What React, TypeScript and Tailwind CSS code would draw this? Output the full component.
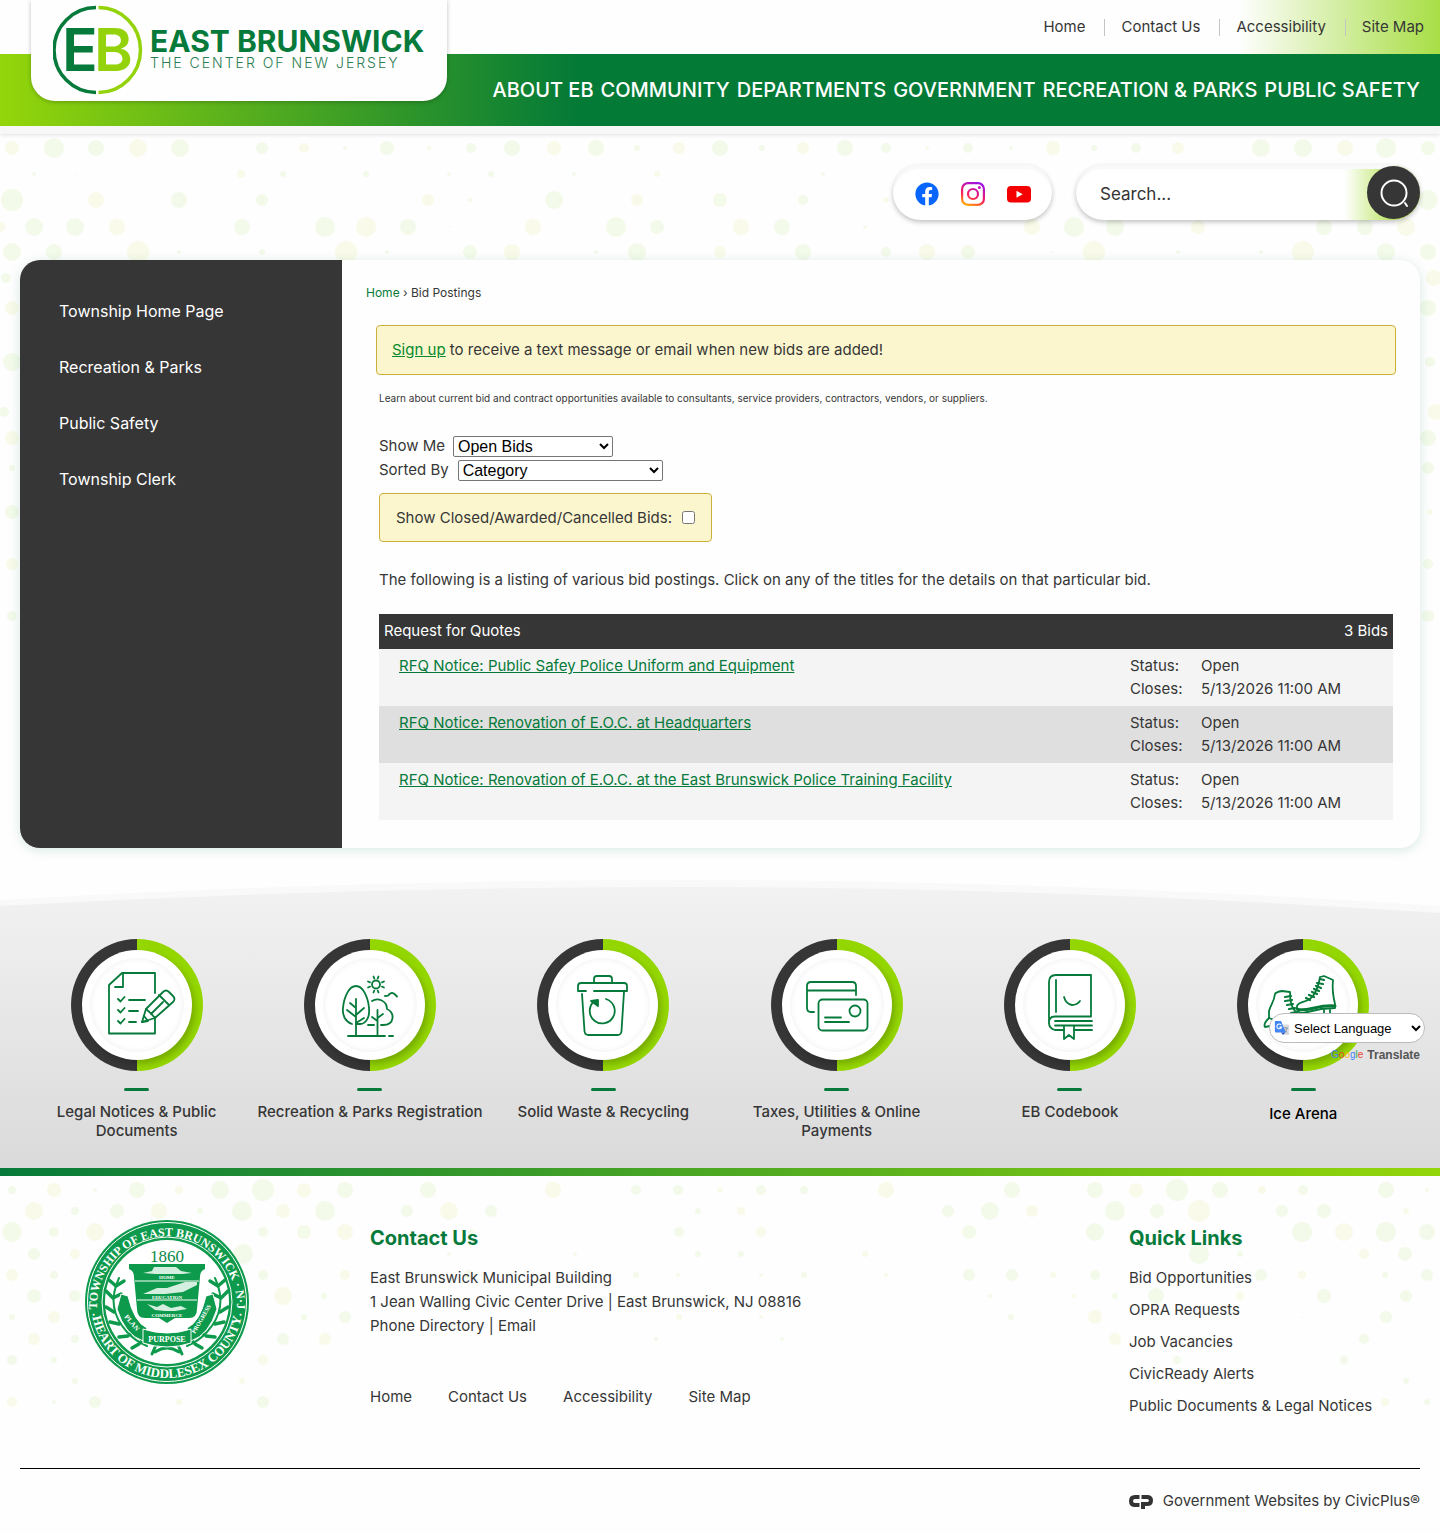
import type { ReactNode } from "react"
import { FaFacebook } from "react-icons/fa"

const topLinks = ["Home", "Contact Us", "Accessibility", "Site Map"]
const navLinks = ["ABOUT EB", "COMMUNITY", "DEPARTMENTS", "GOVERNMENT", "RECREATION & PARKS", "PUBLIC SAFETY"]
const sideLinks = ["Township Home Page", "Recreation & Parks", "Public Safety", "Township Clerk"]
const quickLinks = ["Bid Opportunities", "OPRA Requests", "Job Vacancies", "CivicReady Alerts", "Public Documents & Legal Notices"]

const bids = [
    "RFQ Notice: Public Safey Police Uniform and Equipment",
    "RFQ Notice: Renovation of E.O.C. at Headquarters",
    "RFQ Notice: Renovation of E.O.C. at the East Brunswick Police Training Facility",
]

// every row is [y, [x, radius], ...]
type DotRow = [number, ...[number, number][]]

const headerDots: DotRow[] = [
    [126, [117, 8], [1324, 8]],
    [148, [12, 7], [54, 10], [96, 8], [138, 9], [180, 9], [262, 6], [304, 5], [345, 2], [387, 7], [429, 2], [471, 5],
        [512, 8], [554, 7], [596, 8], [637, 3], [679, 6], [720, 8], [762, 3], [803, 6], [845, 8], [886, 5], [927, 2],
        [968, 5], [1011, 2], [1053, 7], [1094, 3], [1136, 5], [1178, 6], [1261, 9], [1303, 9], [1345, 8], [1386, 10], [1428, 7]],
    [174, [34, 2], [75, 1], [241, 4], [283, 3], [366, 3], [449, 2], [491, 3], [574, 2], [657, 3], [823, 2], [1240, 2], [1406, 2]],
    [200, [12, 11], [96, 8], [179, 8], [262, 6], [428, 6], [470, 2], [554, 9], [637, 6], [720, 7], [803, 5], [886, 3], [1428, 10]],
    [227, [0, 5], [34, 9], [75, 9], [117, 8], [242, 8], [325, 10], [366, 10], [408, 8], [450, 1], [533, 8], [616, 10],
        [657, 7], [741, 8], [782, 8], [865, 2], [1032, 8], [1074, 10], [1115, 9], [1198, 7], [1324, 8], [1365, 8], [1406, 9]],
    [252, [12, 9], [54, 8], [138, 11], [179, 2], [262, 3], [346, 11], [387, 2], [470, 7], [512, 8], [596, 2], [637, 9],
        [720, 6], [803, 8], [886, 5], [927, 8], [968, 7], [1053, 1], [1094, 11], [1178, 2], [1261, 2], [1303, 11], [1386, 9], [1428, 8]],
    [278, [6, 5], [1434, 8]],
    [308, [12, 7], [1428, 8]],
    [362, [12, 9], [1430, 5]],
    [412, [4, 5], [1436, 8]],
    [438, [12, 7], [1428, 8]],
    [468, [12, 3], [1428, 6]],
    [512, [12, 7], [1430, 3]],
    [564, [12, 6], [1428, 5]],
    [616, [12, 5], [1428, 6]],
]

const footerDots: DotRow[] = [
    [22, [12, 4], [54, 7], [95, 2], [137, 8], [179, 4], [220, 9], [263, 11], [304, 7], [345, 8], [428, 8], [553, 8], [636, 5],
        [678, 5], [720, 3], [761, 5], [804, 4], [886, 8], [1012, 8], [1095, 8], [1136, 7], [1177, 11], [1220, 8], [1262, 4],
        [1303, 5], [1386, 8], [1427, 2]],
    [43, [34, 9], [75, 4], [117, 7], [159, 8], [200, 3], [242, 10], [283, 7], [325, 10], [407, 6], [449, 9], [491, 6],
        [698, 3], [741, 4], [948, 6], [990, 9], [1032, 6], [1115, 10], [1157, 7], [1199, 11], [1282, 6], [1324, 7], [1406, 3]],
    [64, [12, 10], [54, 5], [95, 9], [263, 5], [304, 7], [345, 8], [471, 3], [679, 5], [761, 5], [969, 7], [1011, 1],
        [1053, 1], [1095, 9], [1302, 10], [1344, 9], [1386, 10], [1427, 8]],
    [86, [34, 6], [75, 5], [243, 10], [449, 2], [575, 2], [698, 3], [741, 3], [865, 3], [1199, 10], [1240, 3], [1364, 5], [1405, 7]],
    [107, [12, 6], [54, 4], [263, 5], [345, 5], [469, 5], [636, 3], [678, 2], [761, 2], [804, 3], [886, 2], [969, 6], [1012, 6],
        [1053, 3], [1095, 5], [1261, 6], [1302, 4], [1385, 3], [1427, 6]],
    [128, [34, 7], [75, 6], [283, 9], [324, 3], [990, 2], [1074, 2], [1115, 3], [1156, 8], [1240, 4], [1324, 7], [1406, 6]],
    [149, [12, 3], [54, 6], [304, 3], [345, 6], [679, 3], [761, 2], [1011, 3], [1095, 7], [1302, 1], [1386, 6]],
    [171, [34, 6], [75, 4], [283, 6], [325, 6], [656, 2], [782, 2], [1115, 6], [1364, 5]],
    [192, [12, 5], [54, 3], [263, 5], [1177, 4], [1344, 4]],
    [213, [75, 3], [242, 3], [1406, 3]],
    [234, [12, 5], [54, 2], [95, 6], [179, 3], [263, 6], [1177, 3], [1385, 4], [1427, 3]],
]

const Dots = ({ rows, height }: { rows: DotRow[]; height: number }) => (
    <svg
        width="1440"
        height={height}
        viewBox={`0 0 1440 ${height}`}
        aria-hidden="true"
        className="absolute top-0 left-0 pointer-events-none"
    >
        {rows.map(([y, ...dots], r) =>
            dots.map(([x, radius], i) => (
                <circle key={`${r}-${i}`} cx={x} cy={y} r={radius} fill={(r + i) % 3 === 1 ? "#f9fae9" : "#f3faea"} />
            ))
        )}
    </svg>
)

const Logo = () => (
    <svg width="376" height="92" viewBox="0 0 376 92" role="img" aria-label="East Brunswick, The Center of New Jersey">
        <path d="M43 3.500a42 42.500 0 0 0 0 85" fill="none" stroke="#067a3a" strokeWidth="3.500" />
        <path d="M45.500 3.500a42 42.500 0 0 1 0 85" fill="none" stroke="#94d30c" strokeWidth="3.500" />
        <g fontFamily="Inter, sans-serif">
            <text x="9" y="67" fontSize="59" fontWeight="600" fill="#067a3a">E</text>
            <text x="41" y="67" fontSize="59" fontWeight="600" fill="#94d30c">B</text>
            <text x="97" y="48" fontSize="30" fontWeight="700" fill="#067a3a">EAST BRUNSWICK</text>
            <text x="97" y="64" fontSize="14" fontWeight="300" fill="#2a7d52" className="tracking-[2px]">
                THE CENTER OF NEW JERSEY
            </text>
        </g>
    </svg>
)

const InstagramIcon = () => (
    <svg width="24" height="24" viewBox="0 0 24 24" fill="none" strokeWidth="2.200" aria-hidden="true">
        <defs>
            <linearGradient id="insta" x1="6" y1="24" x2="16" y2="0" gradientUnits="userSpaceOnUse">
                <stop offset="0" stopColor="#ffb400" />
                <stop offset="0.400" stopColor="#fb1e5a" />
                <stop offset="1" stopColor="#9a10e8" />
            </linearGradient>
        </defs>
        <rect x="1.100" y="1.100" width="21.800" height="21.800" rx="6" stroke="url(#insta)" />
        <circle cx="12" cy="12" r="5" stroke="url(#insta)" />
        <circle cx="18.400" cy="5.600" r="1.500" fill="#c012b8" />
    </svg>
)

const YoutubeIcon = () => (
    <svg width="24" height="24" viewBox="0 0 24 24" aria-hidden="true">
        <rect x="0" y="4" width="24" height="16.500" rx="4" fill="#f40000" />
        <path d="M9.500 8.800v7l6.200-3.500z" fill="#fff" />
    </svg>
)

const NoticesIcon = () => (
    <>
        <path d="M58 28V8H25L12 20v48.500h46V52" />
        <path d="M26 9v13h-8" />
        <path d="M21 34l2.500 2.500 4-4.500M21 45l2.500 2.500 4-4.500M21 56l2.500 2.500 4-4.500" />
        <path d="M32 35h16M32 46h9M32 57h7" />
        <path d="M45 57l4-13 17-17q3-3 6 0l4 4q3 3 0 6L58 53z" />
        <path d="M49 44q5 4 9 9M62 30l10 10M54 49l12-12M45 57l6-1-4-5" />
    </>
)

const ParksIcon = () => (
    <>
        <path d="M22 59c-6-2-10-8-9-16 1-11 6-22 13-22s12 11 13 22c1 9-3 16-9 16h-4" />
        <path d="M26 34v37M20 38l6 5M17 45l9 7M34 43l-8 7M34 53l-8 5" />
        <path d="M42 36c6-4 15 0 15 8 8 3 8 16-4 16h-2M38 60h6" />
        <path d="M47.500 45v26M42 52l5.500 4M53 49l-5.500 4" />
        <path d="M18 71h37M59 71h4" />
        <circle cx="46" cy="19.500" r="4" />
        <path d="M43.500 11.500l.8 2M48.500 11.500l-.8 2M43.500 27.500l.8-2M48.500 27.500l-.8-2M38 16.500l2 .8M54 16.500l-2 .8M38 22.500l2-.8M54 22.500l-2-.8" />
        <path d="M55 31q4 0 4-1.500 3-3 6 0l2 2" />
    </>
)

const RecyclingIcon = () => (
    <>
        <path d="M23 26h-8v-5q0-3 3-3h43q3 0 3 3v5H31" />
        <path d="M31 18v-4q0-3 3-3h12q3 0 3 3v4" />
        <path d="M19 29l2.500 37q.3 4 4 4h29q3.700 0 4-4L61 27" />
        <path d="M43 34A12.500 12.500 0 1 1 31 36.500" />
        <path d="M28 36l7-1v6z" fill="#067a3a" />
    </>
)

const PaymentsIcon = () => (
    <>
        <path d="M17 47h-3q-4 0-4-4V21q0-4 4-4h41q4 0 4 4v9M10 25.500h49" />
        <rect x="21.500" y="34.500" width="49" height="31" rx="4" />
        <circle cx="58" cy="46" r="5.500" />
        <path d="M28 52.500h16M28 57h24" />
    </>
)

const CodebookIcon = () => (
    <>
        <path d="M61 51.500V10H26q-7 0-7 7v42M61 51.500H25q-6 0-6 6t6 7.500h9M44 65h18" />
        <path d="M26 15v32M34 32q2 7 8 8 5 0 8-4" />
        <path d="M25 56h37M25 60.500h37" />
        <path d="M34 61v13l5-4 5 4V61" />
    </>
)

const SkatesIcon = () => (
    <>
        <path d="M57 12l4-1 9 4c-1 9 0 16 2 24v4l-14 1-18 4q-7 0-6-7c1-5 11-3 16-10 4-6 6-12 7-19z" />
        <path d="M34 44c8 4 22-5 38-3" strokeWidth="3" />
        <path d="M57 14l4 1M54 18l6 1M53 21l5 2M51 24l5 2M49 27l5 2M46 30l5 2M43 33l4 2" strokeWidth="2.200" />
        <path d="M39 49v5M61 45v6h6v-6M33 54h36q5 0 5-3" />
        <path d="M27 27l-8-1q-6 1-7 3c-1 8-4 10-6 17v7l16 6 14-2q4-7-4-11-5-5-5-19z" />
        <path d="M22 32l6-1M22 36l7-1M24 40l6-1M26 44l6-1M28 48l6-1" strokeWidth="2.200" />
        <path d="M6 53q-6 6-4 9l5-1" />
    </>
)

const Service = ({ label, icon, labelClass = "mt-[11px]" }: { label: string; icon: ReactNode; labelClass?: string }) => (
    <a href="#" className="flex flex-col items-center px-1 text-center">
        <span className="flex h-[132px] w-[132px] items-center justify-center rounded-full bg-linear-to-r from-[#363636] from-50% to-[#94d600] to-50%">
            <span className="flex h-[110px] w-[110px] items-center justify-center rounded-full bg-white shadow-[3px_4px_6px_rgba(0,0,0,0.2)]">
                <span className="flex h-[94px] w-[94px] items-center justify-center rounded-full shadow-[inset_0_0_6px_rgba(0,0,0,0.07)]">
                    <svg
                        width="80"
                        height="80"
                        viewBox="0 0 80 80"
                        fill="none"
                        stroke="#067a3a"
                        strokeWidth="1.800"
                        strokeLinecap="round"
                        strokeLinejoin="round"
                        aria-hidden="true"
                    >
                        {icon}
                    </svg>
                </span>
            </span>
        </span>
        <span className="mt-[17px] h-[3px] w-[25px] rounded-full bg-[#067a3a]" />
        <span className={`text-[15px] leading-[19px] font-medium ${labelClass}`}>{label}</span>
    </a>
)

const Seal = () => (
    <svg width="164" height="164" viewBox="0 0 164 164" role="img" aria-label="Township of East Brunswick seal">
        <defs>
            <path id="sealTop" d="M13 98a70 70 0 1 1 138 0" />
            <path id="sealBottom" d="M6 82a76 76 0 0 0 152 0" />
        </defs>
        <circle cx="82" cy="82" r="82" fill="#0d9a4c" />
        <circle cx="82" cy="82" r="79.500" fill="none" stroke="#fff" />
        <circle cx="82" cy="82" r="65" fill="none" stroke="#fff" />
        <circle cx="82" cy="82" r="62" fill="#fff" />
        <g fontFamily="'Liberation Serif', serif" fontWeight="700" fill="#fff">
            <text fontSize="12">
                <textPath href="#sealTop" startOffset="50%" textAnchor="middle">· TOWNSHIP OF EAST BRUNSWICK · N·J ·</textPath>
            </text>
            <text fontSize="13">
                <textPath href="#sealBottom" startOffset="50%" textAnchor="middle">HEART OF MIDDLESEX COUNTY</textPath>
            </text>
        </g>
        <text x="82" y="42" fontSize="17" textAnchor="middle" fontFamily="'Liberation Serif', serif" fill="#0d8a48">1860</text>
        <path d="M44 44h76v5q-5 2-5 8l-3 32q0 9-8 9H90l-8 5-8-5H60q-8 0-8-9l-3-32q0-6-5-8z" fill="#0d9a4c" />
        <path d="M50 61h64M52 80h60" stroke="#fff" strokeWidth="1" />
        <g fill="#d4eedf">
            <path d="M58 53l9-2 2-4h22l5 4 11 2-10 1H70z" />
            <path d="M58 74l14-6 10 0 18-6h12v3l-14 7-18 2z" />
            <path d="M62 84l10 3 6-3 8 4 10-2 6 3-12 2-10 0-10-1z" />
        </g>
        <g fontFamily="'Liberation Serif', serif" fontWeight="700" fontSize="5" textAnchor="middle" fill="#fff">
            <text x="82" y="59">HOME</text>
            <text x="82" y="79">EDUCATION</text>
            <text x="82" y="97">COMMERCE</text>
        </g>
        <g fill="none" stroke="#0d9a4c" strokeWidth="2" strokeLinecap="round">
            <path d="M34 58q-14 30 8 54 8 9 20 14M130 58q14 30-8 54-8 9-20 14" />
            <path d="M31 66l-7-6M31 66l8-5M28 78l-7-7M28 78l8-4M29 92l-8-5M34 104l-9-2M43 116l-9 1M54 124l-7 4M46 114l2-6M56 122l3-6" strokeWidth="3.500" />
            <path d="M133 66l7-6M133 66l-8-5M136 78l7-7M136 78l-8-4M135 92l8-5M130 104l9-2M121 116l9 1M110 124l7 4M118 114l-2-6M108 122l-3-6" strokeWidth="3.500" />
            <path d="M70 132q12-8 24 0M71 125l-4 9M93 125l4 9" strokeWidth="3" />
        </g>
        <path d="M36 74l-4 15q8 26 26 32l4-13q-13-6-19-32zM128 74l4 15q-8 26-26 32l-4-13q13-6 19-32z" fill="#0d9a4c" stroke="#fff" strokeWidth="1" />
        <path d="M58 109q24 8 48 0v14q-24 8-48 0z" fill="#0d9a4c" stroke="#fff" strokeWidth="1" />
        <g fontFamily="'Liberation Serif', serif" fontWeight="700" fill="#fff">
            <text fontSize="8" textAnchor="middle" x="82" y="122">PURPOSE</text>
            <text fontSize="7" transform="translate(39 97) rotate(50)">PLAN</text>
            <text fontSize="6" transform="translate(110 114) rotate(-60)">PROGRESS</text>
        </g>
    </svg>
)

const Header = () => (
    <header className="relative">
        <div className="flex h-[54px] items-center justify-end bg-[#fefefe] bg-linear-to-r from-transparent from-86% to-[#a8de46] to-100%">
            {topLinks.map((link, i) => (
                <span key={link} className="flex items-center">
                    {i > 0 && <span className="h-[17px] w-px bg-[#c4c4c4]" />}
                    <a href="#" className={i === topLinks.length - 1 ? "px-4 text-[15px] leading-6" : "pr-[19px] pl-4 text-[15px] leading-6"}>
                        {link}
                    </a>
                </span>
            ))}
        </div>
        <nav className="flex h-[72px] items-center justify-end gap-[7px] bg-linear-to-r/srgb from-[#94d60a] to-[#047a37] to-40% pr-5 shadow-[0_8px_0_#f7f7f8,0_9px_4px_rgba(0,0,0,0.12)]">
            {navLinks.map((link) => (
                <a key={link} href="#" className="text-xl leading-6 font-medium whitespace-nowrap text-white">
                    {link}
                </a>
            ))}
        </nav>
        <a href="#" className="absolute top-0 left-[31px] block h-[101px] w-[416px] rounded-b-[24px] bg-[#fefefe] pt-1 pl-[22px] shadow-[0_1px_4px_rgba(0,0,0,0.25)]">
            <Logo />
        </a>
    </header>
)

const Toolbar = () => (
    <div className="flex justify-end gap-6 px-5 pt-[39px]">
        <div className="flex h-[55px] w-[159px] items-center justify-center gap-[22px] rounded-full bg-white pt-0.5 shadow-[0_2px_5px_rgba(0,0,0,0.25),inset_0_4px_0_#f9f9f9]">
            <a href="#" aria-label="Facebook"><FaFacebook size={24} color="#0866ff" /></a>
            <a href="#" aria-label="Instagram"><InstagramIcon /></a>
            <a href="#" aria-label="YouTube"><YoutubeIcon /></a>
        </div>
        <form className="flex h-[55px] w-[344px] items-center rounded-full bg-white bg-linear-to-r from-transparent from-78% to-[#94d60a] shadow-[0_2px_5px_rgba(0,0,0,0.25),inset_0_4px_0_#f9f9f9]">
            <input
                type="search"
                aria-label="Search"
                placeholder="Search..."
                className="h-full min-w-0 flex-1 bg-transparent pt-0.5 pl-6 text-[17px] text-[#333] outline-none placeholder:text-[#333]"
            />
            <button type="button" aria-label="Search" className="flex h-[53px] w-[53px] items-center justify-center rounded-full bg-[#363636]">
                <svg width="30" height="30" viewBox="0 0 30 30" fill="none" stroke="#fff" strokeWidth="2" strokeLinecap="round" aria-hidden="true">
                    <circle cx="15" cy="15" r="12.500" />
                    <path d="M26 25l2 3" />
                </svg>
            </button>
        </form>
    </div>
)

const BidTable = () => (
    <table className="mt-[22px] w-full text-left text-[15px] leading-[23px]">
        <thead>
            <tr className="bg-[#363636] text-white">
                <th className="px-[5px] pt-[5px] pb-[7px] font-normal">Request for Quotes</th>
                <th colSpan={2} className="px-[5px] pt-[5px] pb-[7px] text-right font-normal">3 Bids</th>
            </tr>
        </thead>
        <tbody>
            {bids.map((bid) => (
                <tr key={bid} className="align-top odd:bg-[#f4f4f4] even:bg-[#dfdfdf]">
                    <td className="pt-[5px] pb-1.5 pl-5">
                        <a href="#" className="text-[#067a3a] underline">{bid}</a>
                    </td>
                    <td className="w-[71px] pt-[5px] pb-1.5">Status:<br />Closes:</td>
                    <td className="w-[192px] pt-[5px] pb-1.5">Open<br />5/13/2026 11:00 AM</td>
                </tr>
            ))}
        </tbody>
    </table>
)

const Main = () => (
    <main className="mx-5 mt-10 flex min-h-[588px] overflow-hidden rounded-[20px] bg-[#fefefe] shadow-[0_2px_12px_rgba(4,122,90,0.16)]">
        <aside className="w-[23%] bg-[#363636] pt-[39px] pl-[39px]">
            <ul className="flex flex-col gap-8">
                {sideLinks.map((link) => (
                    <li key={link}>
                        <a href="#" className="block text-base text-white">{link}</a>
                    </li>
                ))}
            </ul>
        </aside>
        <section className="flex-1 px-6 pt-6">
            <div className="text-xs leading-[18px]">
                <a href="#" className="text-[#067a3a]">Home</a> › Bid Postings
            </div>
            <div className="mt-[23px] ml-2.5 rounded border border-[#cbb13c] bg-[#fcf6ce] px-[15px] py-3 text-[15px] leading-6">
                <a href="#" className="text-[#078a2e] underline">Sign up</a> to receive a text message or email when new bids are added!
            </div>
            <div className="mr-[3px] ml-[13px]">
                <p className="mt-[15px] text-[10px] leading-4">
                    Learn about current bid and contract opportunities available to consultants, service providers, contractors, vendors, or suppliers.
                </p>
                <div className="mt-7 flex h-6 items-center gap-2 text-[15px]">
                    <label htmlFor="show">Show Me</label>
                    <select id="show" className="h-[21px] w-[160px] rounded-xs border border-[#767676] bg-white font-['Liberation_Sans',sans-serif] text-base leading-none text-black">
                        <option>Open Bids</option>
                    </select>
                </div>
                <div className="flex h-6 items-center gap-[9px] text-[15px]">
                    <label htmlFor="sort">Sorted By</label>
                    <select id="sort" className="h-[21px] w-[205px] rounded-xs border border-[#767676] bg-white font-['Liberation_Sans',sans-serif] text-base leading-none text-black">
                        <option>Category</option>
                    </select>
                </div>
                <label className="mt-[11px] flex w-fit items-center gap-2.5 rounded border border-[#cbb13c] bg-[#fcf6ce] px-4 py-3 text-[15px] leading-[23px]">
                    Show Closed/Awarded/Cancelled Bids:
                    <input type="checkbox" className="h-[13px] w-[13px]" />
                </label>
                <p className="mt-[26px] text-[15px] leading-6">
                    The following is a listing of various bid postings. Click on any of the titles for the details on that particular bid.
                </p>
                <BidTable />
            </div>
        </section>
    </main>
)

const TranslateWidget = () => (
    <div className="absolute top-[137px] right-[15px] flex flex-col items-end">
        <div className="flex h-[30px] w-[156px] items-center rounded-full border border-[#bbb] bg-white pl-1">
            <svg width="16" height="18" viewBox="0 0 18 18" aria-hidden="true">
                <path d="M7 5h9q1 0 1 1v10q0 1-1 1h-5z" fill="#dcdcdc" />
                <path d="M10 9h6M13 8v1M15 9q-1 4-4 5M11 10q2 3 4 4" stroke="#7f8fa4" fill="none" />
                <path d="M1 1h7l5 13H2q-1 0-1-1z" fill="#4285f4" />
                <path d="M8 14h5l-3 3z" fill="#2a56c6" />
                <path d="M8 5.500A2.700 2.700 0 1 0 8.500 8H6" stroke="#fff" fill="none" strokeWidth="1.200" />
            </svg>
            <select aria-label="Select Language" className="h-full flex-1 bg-transparent font-['Liberation_Sans',sans-serif] text-[13px] text-black">
                <option>Select Language</option>
            </select>
        </div>
        <div className="mt-1 mr-[5px] flex items-center gap-1 font-['Liberation_Sans',sans-serif] text-xs leading-4 font-bold text-[#555]">
            <span className="text-[10px] font-normal">
                <span className="text-[#4285f4]">G</span>
                <span className="text-[#ea4335]">o</span>
                <span className="text-[#fbbc05]">o</span>
                <span className="text-[#4285f4]">g</span>
                <span className="text-[#34a853]">l</span>
                <span className="text-[#ea4335]">e</span>
            </span>
            Translate
        </div>
    </div>
)

const Services = () => (
    <section className="relative mt-7">
        <svg
            viewBox="0 0 1440 292"
            preserveAspectRatio="none"
            aria-hidden="true"
            className="absolute inset-0 h-full w-full"
        >
            <defs>
                <linearGradient id="floor" x1="0" y1="0" x2="0" y2="1">
                    <stop offset="0" stopColor="#f2f2f2" />
                    <stop offset="1" stopColor="#dadada" />
                </linearGradient>
            </defs>
            <path d="M0 24Q340 4 690 4T1440 30V292H0z" fill="#f9f9f9" />
            <path d="M0 30Q340 11 690 11T1440 37V292H0z" fill="url(#floor)" />
        </svg>
        <div className="relative grid grid-cols-6 px-5 pt-[63px] pb-7">
            <Service label="Legal Notices & Public Documents" icon={<NoticesIcon />} />
            <Service label="Recreation & Parks Registration" icon={<ParksIcon />} />
            <Service label="Solid Waste & Recycling" icon={<RecyclingIcon />} />
            <Service label="Taxes, Utilities & Online Payments" icon={<PaymentsIcon />} />
            <Service label="EB Codebook" icon={<CodebookIcon />} />
            <Service label="Ice Arena" icon={<SkatesIcon />} labelClass="mt-[13px] text-black" />
        </div>
        <TranslateWidget />
    </section>
)

const Footer = () => (
    <footer className="relative overflow-hidden">
        <Dots rows={footerDots} height={248} />
        <div className="relative h-2 bg-linear-to-r/srgb from-[#067a3a] to-[#94d60a]" />
        <div className="relative mx-5 flex border-b border-black pt-11 pb-[50px]">
            <div className="w-1/4 pl-[65px]">
                <Seal />
            </div>
            <div className="flex-1 pt-1">
                <h2 className="text-xl leading-7 font-bold text-[#067a3a]">Contact Us</h2>
                <p className="mt-[14px] text-[15px] leading-6">
                    East Brunswick Municipal Building<br />
                    1 Jean Walling Civic Center Drive | East Brunswick, NJ 08816<br />
                    <a href="#">Phone Directory</a> | <a href="#">Email</a>
                </p>
                <ul className="mt-[47px] flex gap-9 text-[15px] leading-6">
                    {topLinks.map((link) => (
                        <li key={link}><a href="#">{link}</a></li>
                    ))}
                </ul>
            </div>
            <div className="w-[291px] pt-1">
                <h2 className="text-xl leading-7 font-bold text-[#067a3a]">Quick Links</h2>
                <ul className="mt-[14px] flex flex-col gap-2 text-[15px] leading-6">
                    {quickLinks.map((link) => (
                        <li key={link}><a href="#">{link}</a></li>
                    ))}
                </ul>
            </div>
        </div>
        <div className="relative flex items-center justify-end gap-2.5 px-5 pt-5 pb-[21px] text-[15px] leading-6">
            <svg width="24" height="16" viewBox="0 0 24 16" fill="none" stroke="#333" strokeWidth="4" aria-hidden="true">
                <path d="M10.500 4H6q-4 0-4 4t4 4h4.500" />
                <path d="M12.500 4H18q4 0 4 3.500T18 11h-4v5" />
            </svg>
            <a href="#">Government Websites by CivicPlus®</a>
        </div>
    </footer>
)

export default function App() {
    return (
        <div className="relative overflow-hidden bg-[#fefefe] font-[Inter,sans-serif] text-[#363636]">
            <Dots rows={headerDots} height={640} />
            <div className="relative">
                <Header />
                <Toolbar />
                <Main />
                <Services />
                <Footer />
            </div>
        </div>
    )
}
